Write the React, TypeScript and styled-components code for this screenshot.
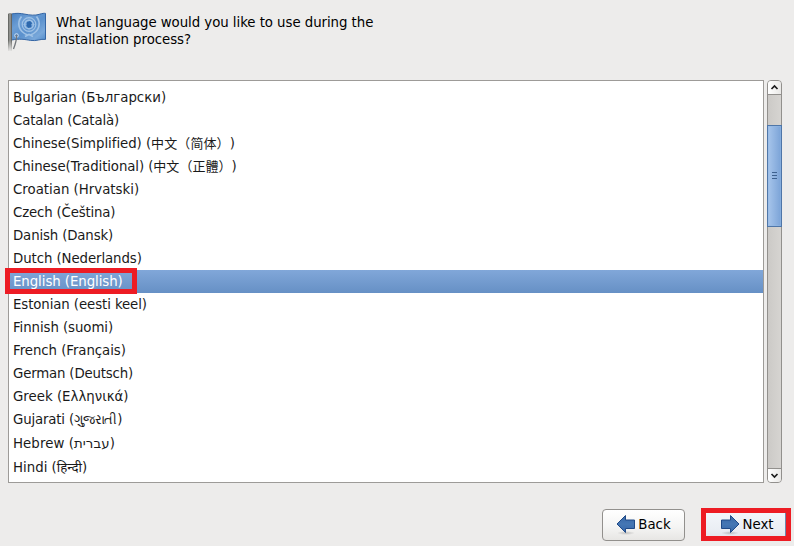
import React from "react";
import styled, { createGlobalStyle, css } from "styled-components";

const GlobalStyle = createGlobalStyle`
  * { box-sizing: border-box; }
  html, body { margin: 0; padding: 0; }
  body {
    background: #edeceb;
    font-family: "DejaVu Sans", "Noto Sans CJK SC", "Noto Sans", sans-serif;
    font-size: 13.33px;
    color: #000;
    overflow: hidden;
  }
`;

const Screen = styled.main`
  width: 794px;
  height: 546px;
  padding: 0 3px 0 8px;
  display: flex;
  flex-direction: column;
`;

const Header = styled.header`
  height: 80px;
  padding-top: 12px;
  display: flex;
  gap: 8px;
`;

const Question = styled.h1`
  margin: 2px 0 0;
  width: 330px;
  font-size: 13.33px;
  font-weight: 400;
  line-height: 17px;
  letter-spacing: -0.055px;
`;

const Body = styled.section`
  display: flex;
  gap: 3px;
  height: 403px;
`;

const List = styled.ul`
  margin: 0;
  padding: 5px 0 0;
  list-style: none;
  width: 756px;
  border: 1px solid #9d9b98;
  background: #fff;
`;

const Row = styled.li<{ $selected?: boolean; $tall?: boolean; $tracking?: number }>`
  position: relative;
  height: ${(p) => (p.$tall ? 24 : 23)}px;
  line-height: ${(p) => (p.$tall ? 25 : 23)}px;
  letter-spacing: ${(p) => p.$tracking ?? 0}px;
  padding-left: 4px;
  color: #1a1a1a;
  white-space: nowrap;
  ${(p) =>
    p.$selected &&
    css`
      color: #fff;
      background: linear-gradient(#81a7d9, #6690c5);
    `}
`;

const Native = styled.span<{ $size?: number; $spacing?: number }>`
  line-height: 1;
  ${(p) => p.$size && css`font-size: ${p.$size}px;`}
  ${(p) => p.$spacing !== undefined && css`letter-spacing: ${p.$spacing}px;`}
  text-spacing-trim: space-all;
`;

const Marker = styled.span<{ $row?: boolean }>`
  position: absolute;
  border: 5px solid #ed1c24;
  pointer-events: none;
  ${(p) =>
    p.$row
      ? css`left: -4px; top: -2px; width: 132px; height: 26px;`
      : css`inset: -2px -6px -1px -3px;`}
`;

const Scrollbar = styled.div`
  width: 15px;
  display: flex;
  flex-direction: column;
  border: 1px solid #92908d;
  border-radius: 4px;
  background: linear-gradient(90deg, #cccac7, #d6d4d1);
`;

const Stepper = styled.div<{ $down?: boolean }>`
  height: 14px;
  flex: none;
  display: flex;
  align-items: center;
  justify-content: center;
  border-radius: ${(p) => (p.$down ? "0 0 3px 3px" : "3px 3px 0 0")};
  background: linear-gradient(90deg, #fff, #e9e8e6);
  ${(p) => (p.$down ? "border-top" : "border-bottom")}: 1px solid #92908d;
`;

const Track = styled.div`
  flex: 1;
  padding-top: 30px;
  margin: 0 -1px;
`;

const Thumb = styled.div`
  height: 102px;
  border: 1px solid #4f76a8;
  background: linear-gradient(90deg, #a7c5eb, #7ba3d7);
  box-shadow: inset 0 0 0 1px rgba(145, 183, 228, 0.5);
  display: flex;
  flex-direction: column;
  align-items: center;
  justify-content: center;
  gap: 2px;
  padding-bottom: 1px;
`;

const Grip = styled.i`
  width: 5px;
  height: 1px;
  background: #3d618f;
`;

const Footer = styled.footer`
  display: flex;
  justify-content: flex-end;
  gap: 18px;
  padding: 26px 5px 0 0;
`;

const Button = styled.button<{ $next?: boolean }>`
  position: relative;
  width: 83px;
  height: 32px;
  padding: 0 0 2px ${(p) => (p.$next ? 5 : 0)}px;
  border: 1px solid ${(p) => (p.$next ? "#6b88ae" : "#92908d")};
  border-radius: 4px;
  background: ${(p) =>
    p.$next ? "linear-gradient(#f4f7fc, #e9edf3 70%, #dfe3e9)" : "linear-gradient(#fff, #f5f5f4 55%, #e7e6e4)"};
  font: inherit;
  color: #000;
  display: flex;
  align-items: center;
  justify-content: center;
  gap: 2px;
`;

const FlagIcon = () => (
  <svg width="40" height="40" viewBox="0 0 40 40">
    <defs>
      <linearGradient id="cloth" x1="0" y1="0" x2="1" y2="1">
        <stop offset="0" stopColor="#477fc0" />
        <stop offset=".3" stopColor="#6b9dd5" />
        <stop offset=".55" stopColor="#5b91cd" />
        <stop offset=".8" stopColor="#79a8da" />
        <stop offset="1" stopColor="#508aca" />
      </linearGradient>
      <linearGradient id="pole">
        <stop offset="0" stopColor="#555753" />
        <stop offset=".5" stopColor="#a1a29f" />
        <stop offset="1" stopColor="#50514f" />
      </linearGradient>
      <linearGradient id="fade" x1="0" y1="0" x2="0" y2="1">
        <stop offset=".7" stopColor="#edeceb" stopOpacity="0" />
        <stop offset="1" stopColor="#edeceb" />
      </linearGradient>
    </defs>
    <path d="M3.500 2C8 1 12 1.200 17 2.200s10 1.400 14 .2 5-1.200 6.500-1v26c-5-.7-9 2-15 1S12 26.500 3.500 28Z" fill="url(#cloth)" stroke="#3465a4" />
    <g fill="none" stroke="#9fc2e6">
      <circle cx="21" cy="12.500" r="6.800" strokeWidth="1.200" />
      <circle cx="21" cy="12.500" r="4.300" strokeWidth="1.600" />
      <path d="M21 6v13M14.500 12.500h13M17 8.500l8 8M25 8.500l-8 8" strokeWidth=".5" />
      <path d="M13.500 4.500C8.500 11 10.500 19.500 19.500 23M28.500 4.500c5 6.500 3 15-6 18.500M17 24.500l4-2 4 2" strokeWidth="1.700" />
    </g>
    <path d="M19 10l3-1 2 2-1 2 .5 2-3 1-2-2Z" fill="#2d68ad" />
    <path d="M0 2Q2 0 4 2V39H0Z" fill="url(#pole)" />
    <path d="M0 0H5V40H0Z" fill="url(#fade)" />
    <circle cx="8.500" cy="23.500" r="1.800" fill="#4c80bd" stroke="#d7e4f2" />
    <path d="M8.500 23Q9 28 5.500 37" fill="none" stroke="#73777c" strokeWidth="1.300" />
  </svg>
);

const ArrowIcon = ({ right }: { right?: boolean }) => (
  <svg width="20" height="22" viewBox="0 0 20 22">
    <defs>
      <linearGradient id="arrow" x1="0" y1="0" x2="0" y2="1">
        <stop offset="0" stopColor="#3565a5" />
        <stop offset=".5" stopColor="#4577b4" />
        <stop offset="1" stopColor="#3567aa" />
      </linearGradient>
      <radialGradient id="shade">
        <stop offset="0" stopColor="#777" stopOpacity=".4" />
        <stop offset="1" stopColor="#777" stopOpacity="0" />
      </radialGradient>
    </defs>
    <ellipse cx="10" cy="20" rx="9" ry="2" fill="url(#shade)" />
    <path
      d="M1 11 9.500 2.500V7H18.500V15.500H9.500V19.500Z"
      transform={right ? "translate(20 0) scale(-1 1)" : undefined}
      fill="url(#arrow)"
      stroke="#204a87"
      strokeLinejoin="round"
    />
  </svg>
);

const Chevron = ({ down }: { down?: boolean }) => (
  <svg width="9" height="7" viewBox="0 0 9 7">
    <path d={down ? "M1.500 2 4.500 5 7.500 2" : "M1.500 5 4.500 2 7.500 5"} fill="none" stroke="#1c1c1c" strokeWidth="1.700" />
  </svg>
);

type Language = {
  name: string;
  native: string;
  size?: number;
  spacing?: number;
  tracking?: number;
  tall?: boolean;
};

const languages: Language[] = [
  { name: "Bulgarian", native: "Български" },
  { name: "Catalan", native: "Català", tracking: -0.16 },
  { name: "Chinese(Simplified)", native: "中文（简体）", size: 13, spacing: 0.1, tracking: -0.05 },
  { name: "Chinese(Traditional)", native: "中文（正體）", size: 13, spacing: 0.05, tracking: -0.1 },
  { name: "Croatian", native: "Hrvatski" },
  { name: "Czech", native: "Čeština", tracking: -0.17 },
  { name: "Danish", native: "Dansk", tracking: -0.15 },
  { name: "Dutch", native: "Nederlands", tracking: -0.09 },
  { name: "English", native: "English", tracking: -0.07 },
  { name: "Estonian", native: "eesti keel", tracking: -0.1 },
  { name: "Finnish", native: "suomi", tracking: -0.08 },
  { name: "French", native: "Français", tracking: -0.06 },
  { name: "German", native: "Deutsch", tracking: -0.18 },
  { name: "Greek", native: "Ελληνικά" },
  { name: "Gujarati", native: "ગુજરાતી", tracking: -0.17 },
  { name: "Hebrew", native: "עברית", tracking: 0.07, tall: true },
  { name: "Hindi", native: "हिन्दी", tall: true },
];

export default function App() {
  const selected = "English";
  return (
    <>
      <GlobalStyle />
      <Screen>
        <Header>
          <FlagIcon />
          <Question>What language would you like to use during the installation process?</Question>
        </Header>
        <Body>
          <List>
            {languages.map((l) => (
              <Row key={l.name} $selected={l.name === selected} $tall={l.tall} $tracking={l.tracking}>
                {l.name} (<Native $size={l.size} $spacing={l.spacing}>{l.native}</Native>)
                {l.name === selected && <Marker $row />}
              </Row>
            ))}
          </List>
          <Scrollbar>
            <Stepper><Chevron /></Stepper>
            <Track>
              <Thumb><Grip /><Grip /><Grip /></Thumb>
            </Track>
            <Stepper $down><Chevron down /></Stepper>
          </Scrollbar>
        </Body>
        <Footer>
          <Button><ArrowIcon />Back</Button>
          <Button $next><ArrowIcon right />Next<Marker /></Button>
        </Footer>
      </Screen>
    </>
  );
}
